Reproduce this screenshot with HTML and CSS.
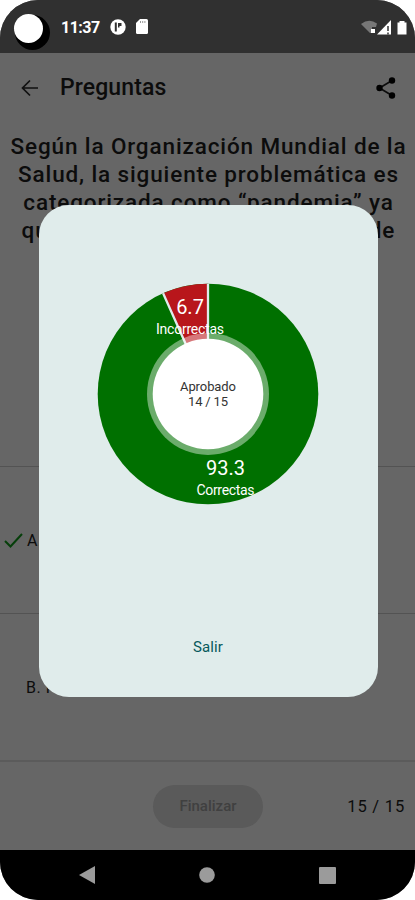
FILE: index.html
```
<!DOCTYPE html>
<html lang="es">
<head>
	<meta charset="UTF-8">
	<title>Preguntas</title>
	<link rel="stylesheet" href="styles.css">
</head>
<body>
	<div class="phone">
		<div class="status">
			<div class="camera"></div>
			<span class="time">11:37</span>
			<svg class="app_icon" width="16" height="16" viewBox="0 0 16 16">
				<circle cx="8" cy="8" r="7.7" fill="#fff"/>
				<path d="M5.8 3.500v9" fill="none" stroke="#303030" stroke-width="2"/>
				<path d="M8 4h3.500v3H9.500v1.500H8z" fill="#303030"/>
			</svg>
			<svg class="sd_icon" width="12" height="15" viewBox="0 0 12 15">
				<path d="M4 0h6.500q1.500 0 1.500 1.500v12q0 1.500-1.500 1.500h-9Q0 15 0 13.500V4z" fill="#fff"/>
				<path d="M4.500 2v2M6.700 2v2M8.900 2v2" stroke="#999" stroke-width="1"/>
			</svg>
			<svg class="signal" width="48" height="18" viewBox="0 0 48 18">
				<path d="M-1 5Q7-1 15 4.500L14 8h-4v6H8z" fill="#777"/>
				<path d="M9 10h4v4H9z" fill="#fff"/>
				<path d="M15 15.500L29 1v14.500z" fill="#fff"/>
				<path d="M26 7v5M26 13.500v2" stroke="#303030" stroke-width="1.500"/>
				<path d="M35.500 3.500h2V2h5v1.500h2v12h-9z" fill="#fff"/>
			</svg>
		</div>

		<div class="bar">
			<svg class="back" width="18" height="18" viewBox="0 0 18 18">
				<path d="M17 9H2M9 1.500L1.500 9 9 16.500" fill="none" stroke="#111" stroke-width="1.700"/>
			</svg>
			<h1>Preguntas</h1>
			<svg class="share" width="20" height="22" viewBox="0 0 20 22">
				<path d="M16 3.500L3.500 11 16 18.500" fill="none" stroke="#0c0c0c" stroke-width="1.700"/>
				<circle cx="16" cy="3.500" r="3.200"/>
				<circle cx="3.500" cy="11" r="3.200"/>
				<circle cx="16" cy="18.500" r="3.200"/>
			</svg>
		</div>

		<p class="question">
			Según la Organización Mundial de la<br>
			Salud, la siguiente problemática es<br>
			categorizada como “pandemia” ya<br>
			<span class="last">que afecta a una gran cantidad de</span>
		</p>

		<div class="option">
			<svg class="check" width="19" height="15" viewBox="0 0 19 15">
				<path d="M1 8l5.500 5.500L18 1" fill="none" stroke="#063f0a" stroke-width="2"/>
			</svg>
			<span>A.</span>
		</div>
		<div class="option option_b"><span>B. H</span></div>

		<div class="footer">
			<button class="finish" disabled>Finalizar</button>
			<span class="count">15 / 15</span>
		</div>

		<div class="nav">
			<svg width="16" height="18" viewBox="0 0 16 18"><path d="M0 9L16 0v18z" fill="#9b9b9b"/></svg>
			<svg width="16" height="16" viewBox="0 0 16 16"><circle cx="8" cy="8" r="7.800" fill="#9b9b9b"/></svg>
			<svg width="17" height="17" viewBox="0 0 17 17"><rect width="17" height="17" rx="1" fill="#9b9b9b"/></svg>
		</div>

		<div class="dialog">
			<svg class="chart" width="222" height="222" viewBox="-111 -111 222 222">
				<circle r="110.300" fill="#007000"/>
				<path d="M0 0L-44.900-100.800A110.300 110.300 0 0 1 0-110.300z" fill="#b8161b"/>
				<path d="M0 0L-44.900-100.800M0 0V-110.300" stroke="#e0eceb" stroke-width="2.300"/>
				<circle r="61" fill="#fff" fill-opacity=".42"/>
				<circle r="55.300" fill="#fff"/>
				<text class="value" x="-18" y="-80.500">6.7</text>
				<text class="label" x="-18" y="-60.500" textLength="68">Incorrectas</text>
				<text class="value" x="17.500" y="81">93.3</text>
				<text class="label" x="17.500" y="101" textLength="58">Correctas</text>
				<text class="center" x="0" y="-3" textLength="56">Aprobado</text>
				<text class="center" x="0" y="12" textLength="40">14 / 15</text>
			</svg>
			<a href="javascript:;" class="exit">Salir</a>
		</div>
	</div>
</body>
</html>
```

FILE: styles.css
```
*{margin: 0; padding: 0; box-sizing: border-box;}
body{background: #fff;}
svg{display: block; flex: none;}
.phone{
	width: 415px;
	height: 900px;
	background: #666;
	border-radius: 38px;
	overflow: hidden;
	position: relative;
	font-family: Roboto, "Liberation Sans", sans-serif;
	color: #0c0c0c;
	display: flex;
	flex-direction: column;
}
.status{
	height: 53px;
	flex: none;
	background: #303030;
	padding: 0 5px 0 14px;
	display: flex;
	align-items: center;
}
.camera{
	width: 29px;
	height: 29px;
	border-radius: 50%;
	background: #fff;
	box-shadow: 4px 4px 0 3px #000;
	margin-top: 3px;
}
.time{
	width: 38px;
	margin-left: 18px;
	font-size: 16px;
	font-weight: 700;
	letter-spacing: -.5px;
	color: #fff;
	padding-top: 1px;
}
.app_icon{margin-left: 11px;}
.sd_icon{margin-left: 10px;}
.signal{
	margin: 2px 0 0 auto;
	overflow: visible;
}
.bar{
	height: 69px;
	flex: none;
	padding: 0 19px 0 21px;
	display: flex;
	align-items: center;
}
.bar h1{
	margin-left: 21px;
	font-size: 23px;
	font-weight: 500;
	letter-spacing: .1px;
}
.share{margin-left: auto;}
.question{
	height: 344px;
	flex: none;
	padding: 10px 0 0 2px;
	font-size: 22.5px;
	line-height: 28px;
	font-weight: 500;
	letter-spacing: .87px;
	text-align: center;
	white-space: nowrap;
}
.last{letter-spacing: 1.02px;}
.option{
	height: 147px;
	flex: none;
	border-top: 1px solid #535353;
	padding-left: 4px;
	display: flex;
	align-items: center;
	gap: 4px;
	font-size: 16px;
	letter-spacing: .5px;
}
.option_b{padding-left: 26px;}
.footer{
	height: 90px;
	flex: none;
	border-top: 2px solid #5b5b5b;
	padding: 0 10px 0 153px;
	display: flex;
	align-items: center;
	justify-content: space-between;
}
.finish{
	width: 110px;
	height: 43px;
	border: 0;
	border-radius: 22px;
	background: #5a5a5a;
	color: #404040;
	font: 500 15px Roboto, sans-serif;
	letter-spacing: 0;
}
.count{
	font-size: 16.5px;
	letter-spacing: .8px;
}
.nav{
	height: 50px;
	flex: none;
	background: #000;
	padding: 0 79px;
	display: flex;
	align-items: center;
	justify-content: space-between;
}
.dialog{
	width: 339px;
	height: 492px;
	position: absolute;
	top: 205px;
	left: 38.5px;
	border-radius: 30px;
	background: #e0eceb;
	display: flex;
	flex-direction: column;
	align-items: center;
}
.chart{margin-top: 78.4px;}
.chart text{text-anchor: middle; fill: #fff;}
.chart .value{font-size: 20px;}
.chart .label{font-size: 14px;}
.chart .center{font-size: 13px; fill: #333;}
.exit{
	margin-top: 131.6px;
	font-size: 15px;
	line-height: 20px;
	font-weight: 400;
	letter-spacing: .1px;
	color: #07595b;
	text-decoration: none;
}
```
